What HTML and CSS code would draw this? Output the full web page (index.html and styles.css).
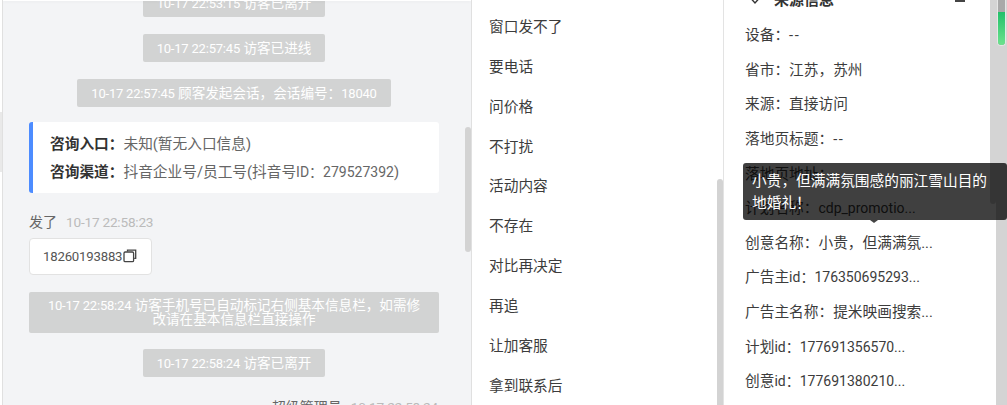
FILE: index.html
```html
<!DOCTYPE html>
<html lang="zh">
<head>
<meta charset="utf-8">
<title>会话</title>
<link rel="stylesheet" href="styles.css">
</head>
<body>
<div class="page">
  <div class="edge"></div>
  <section class="chat">
    <div class="chat-shadow"></div>
    <div class="chat-flow">
      <div class="pill narrow first"><span class="ts">10-17 22:53:15</span> 访客已离开</div>
      <div class="pill narrow"><span class="ts">10-17 22:57:45</span> 访客已进线</div>
      <div class="pill mid"><span class="ts">10-17 22:57:45</span> 顾客发起会话，会话编号：<span class="ts">18040</span></div>
      <div class="card">
        <div class="card-row"><b>咨询入口：</b>未知(暂无入口信息)</div>
        <div class="card-row"><b>咨询渠道：</b>抖音企业号/员工号(抖音号<span class="num">ID：279527392</span>)</div>
      </div>
      <div class="meta"><span class="who">发了</span><span class="time">10-17 22:58:23</span></div>
      <div class="bubble"><span class="ts">18260193883</span><svg class="copy" width="14" height="14" viewBox="0 0 14 14" fill="none" stroke="#444" stroke-width="1.3"><path d="M4.5 2.6V1.2h8.2v8.2h-1.5"/><rect x="1" y="3" width="9.6" height="9.6" rx="1.2"/></svg></div>
      <div class="pill wide"><span class="ts">10-17 22:58:24</span> 访客手机号已自动标记右侧基本信息栏，如需修改请在基本信息栏直接操作</div>
      <div class="pill narrow"><span class="ts">10-17 22:58:24</span> 访客已离开</div>
      <div class="meta right"><span class="who">超级管理员</span><span class="time">10-17 22:58:24</span></div>
    </div>
    <div class="chat-thumb"></div>
  </section>
  <section class="replies">
    <ul class="reply-list">
      <li>窗口发不了</li>
      <li>要电话</li>
      <li>问价格</li>
      <li>不打扰</li>
      <li>活动内容</li>
      <li>不存在</li>
      <li>对比再决定</li>
      <li>再追</li>
      <li>让加客服</li>
      <li>拿到联系后</li>
    </ul>
    <div class="reply-thumb"></div>
  </section>
  <section class="source">
    <div class="source-head">
      <svg class="chev" width="10" height="8" viewBox="0 0 10 8" fill="none" stroke="#333" stroke-width="1.4"><path d="M1 1.5 5 6l4-4.5"/></svg>
      <b>来源信息</b>
      <span class="dash"></span>
    </div>
    <div class="field">设备：<span class="empty">--</span></div>
    <div class="field">省市：江苏，苏州</div>
    <div class="field">来源：直接访问</div>
    <div class="field">落地页标题：<span class="empty">--</span></div>
    <div class="field">落地页地址：</div>
    <div class="field">计划名称：<span class="num">cdp_promotio...</span></div>
    <div class="field">创意名称：小贵，但满满氛...</div>
    <div class="field">广告主<span class="num">id：</span><span class="num">176350695293...</span></div>
    <div class="field">广告主名称：提米映画搜索...</div>
    <div class="field">计划<span class="num">id：</span><span class="num">177691356570...</span></div>
    <div class="field">创意<span class="num">id：</span><span class="num">177691380210...</span></div>
    <div class="source-thumb"></div>
    <div class="tooltip">小贵，但满满氛围感的丽江雪山目的地婚礼！<i class="tip-arrow"></i></div>
  </section>
  <aside class="gutter"><div class="gutter-thumb"><div class="level"></div></div></aside>
</div>
</body>
</html>
```
FILE: styles.css
```css
* { box-sizing: border-box; }
html, body { margin: 0; padding: 0; height: 100%; overflow: hidden; background: #fff; }
body { font-family: Roboto, "Noto Sans CJK SC", sans-serif; font-size: 14.7px; color: #333; font-variant-ligatures: none; }
.page { display: flex; width: 1007px; height: 405px; overflow: hidden; }
.edge { width: 2px; flex: none; background: linear-gradient(#fff 0 112px, #e9e9e9 112px 172px, #fff 172px); }
.ts { font-size: 13px; letter-spacing: -0.2px; }
.num { font-size: 14px; }
.empty { letter-spacing: 1.5px; }
.chat { position: relative; width: 470px; flex: none; height: 405px; overflow: hidden; background: #f3f4f6; border-left: 1px solid #e0e0e0; border-right: 1px solid #e0e0e0; }
.chat-shadow { position: absolute; left: 0; right: 0; top: 0; height: 1px; background: #fff; z-index: 1; box-shadow: 0 1px 3px rgba(0,0,0,.06); }
.chat-flow { display: flex; flex-direction: column; align-items: center; padding: 0 32px 0 26px; width: 100%; }
.pill { background: #d2d3d3; color: #fff; border-radius: 2px; text-align: center; font-size: 13.6px; line-height: 14px; height: 28px; padding: 7px 13px; margin-bottom: 17px; flex: none; }
.pill.narrow { width: 182px; white-space: nowrap; }
.pill.mid { width: 314px; white-space: nowrap; margin-bottom: 15px; }
.pill.wide { width: 410px; height: 41px; line-height: 13.5px; padding: 7px 13px 7px; margin-bottom: 16px; }
.pill.first { margin-top: -11px; }
.card { align-self: stretch; height: 71px; flex: none; background: #fff; border-left: 4px solid #4d8cff; border-radius: 3px; padding: 8px 17px; margin-bottom: 19px; }
.card-row { height: 28px; line-height: 28px; color: #666; white-space: nowrap; }
.card-row b { color: #333; font-weight: 700; }
.meta { align-self: stretch; flex: none; font-size: 14px; line-height: 18px; padding-top: 1px; margin-bottom: 7px; height: 19px; }
.meta.right { text-align: right; margin-top: 3px; padding-right: 1px; }
.who { color: #666; margin-right: 9px; }
.time { color: #bbb; font-size: 13.6px; letter-spacing: -0.2px; }
.bubble { align-self: flex-start; flex: none; display: flex; align-items: center; width: 123px; height: 37px; background: #fff; border: 1px solid #e2e2e2; border-radius: 4px; padding-left: 13px; color: #555; margin-bottom: 17px; }
.bubble .ts { font-size: 13.2px; }
.copy { flex: none; margin-left: 1px; margin-top: -2px; }
.chat-thumb { position: absolute; left: 462px; top: 127px; width: 6px; height: 125px; background: #d3d3d3; border-radius: 3px; }
.replies { position: relative; width: 251px; flex: none; height: 405px; overflow: hidden; background: #fff; }
.reply-list { list-style: none; margin: 0; padding: 7px 0 0 17px; }
.reply-list li { height: 39.85px; line-height: 40px; color: #3c3c3c; }
.reply-thumb { position: absolute; left: 245px; top: 179px; width: 6px; height: 226px; background: #d3d3d3; border-radius: 3px 3px 0 0; }
.source { position: relative; width: 273px; flex: none; height: 405px; background: #fff; border-left: 1px solid #e3e3e3; padding-left: 21px; }
.source-head { display: flex; align-items: center; height: 18px; margin-top: -11px; margin-bottom: 11px; color: #333; font-size: 15px; }
.source-head b { margin-left: 14px; }
.chev { margin-left: 5px; margin-top: 6px; flex: none; }
.dash { width: 10px; height: 2px; background: #444; margin-left: auto; margin-right: 31px; margin-top: 5px; }
.field { height: 34.65px; line-height: 34.65px; color: #3c3c3c; white-space: nowrap; }
.source-thumb { position: absolute; left: 266px; top: 0; width: 6px; height: 204px; background: #d4d4d4; border-radius: 0 0 3px 3px; }
.tooltip { position: absolute; left: 19px; top: 163px; width: 264px; height: 57px; background: rgba(0,0,0,.75); color: #fff; border-radius: 3px; padding: 7px 10px 7px 9px; line-height: 22px; z-index: 5; }
.tip-arrow { position: absolute; left: 127px; bottom: -3px; width: 0; height: 0; border-left: 4px solid transparent; border-right: 4px solid transparent; border-top: 3px solid #444; }
.gutter { flex: 1; height: 405px; background: #d4d4d4; position: relative; }
.gutter-thumb { width: 9px; height: 46px; margin-left: 1px; border-radius: 0 0 4px 4px; background: #a9a9a9; overflow: hidden; border: 1px solid #e6e6e6; border-top: 0; }
.level { margin-top: 12px; height: 34px; background: linear-gradient(#22c06a, #6fe38f); }
```
